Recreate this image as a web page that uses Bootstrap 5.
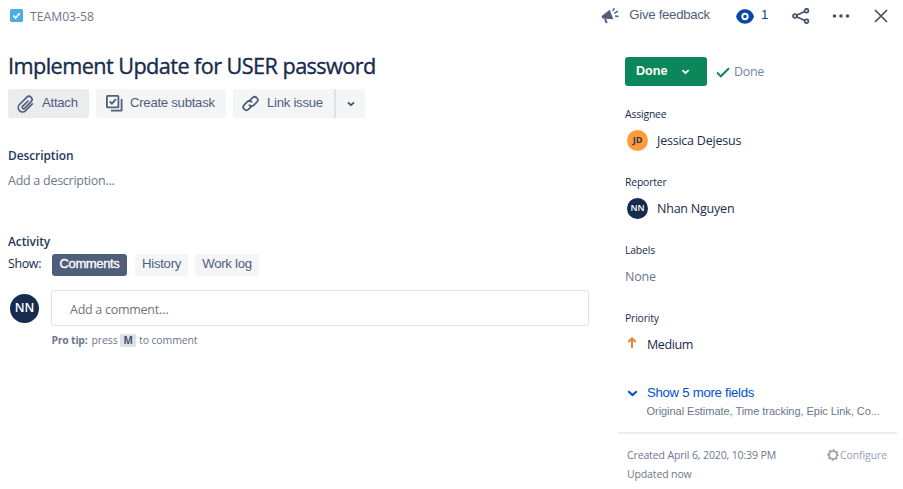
<!DOCTYPE html>
<html lang="en">
<head>
<meta charset="utf-8">
<meta name="viewport" content="width=device-width, initial-scale=1">
<title>TEAM03-58</title>
<link href="https://cdn.jsdelivr.net/npm/bootstrap@5.3.0/dist/css/bootstrap.min.css" rel="stylesheet">
<style>
  body { width: 903px; height: 489px; overflow: hidden; background: #fff; color: #172b4d; font: 12.5px/20px "Open Sans", "Noto Sans", sans-serif; letter-spacing: -.27px; white-space: nowrap; }
  svg { display: block; flex: none; }
  .ui { font-family: "Liberation Sans", Arial, sans-serif; font-size: 13.2px; letter-spacing: -.28px; }
  .slate { color: #505f79; }
  .muted { color: #6b778c; }
  .topbar { height: 32px; padding: 0 15px 0 10px; }
  .issue-key { font-size: 12.2px; letter-spacing: 0; color: #6b778c; margin-left: 7px; padding-top: 1px; }
  .main-col { width: 581px; margin-left: 8px; }
  .side-col { width: 279px; margin-left: 29px; }
  .issue-title { font-size: 21.7px; line-height: 28px; font-weight: 500; letter-spacing: -.58px; margin: 20px 0 9px; -webkit-text-stroke: .35px #172b4d; }
  .tool { height: 29px; padding: 0 11px 2px 9px; background: #f4f5f7; border-radius: 3px; border: 0; color: #505f79; letter-spacing: -.28px; }
  .tool.hovered { background: #ebecf0; }
  .sec { font-size: 11.9px; font-weight: 600; line-height: 20px; letter-spacing: -.05px; margin: 0; color: #253858; }
  .tab-btn { height: 22px; padding: 0 7px 2px; border-radius: 3px; background: #f4f5f7; color: #505f79; border: 0; line-height: 20px; }
  .tab-btn.on { background: #505f79; color: #fff; letter-spacing: -.35px; font-size: 13px; -webkit-text-stroke: .3px #fff; }
  .face { border-radius: 50%; background: #172b4d; color: #fff; font-weight: 600; letter-spacing: 0; flex: none; }
  .face-lg { width: 29px; height: 29px; font-size: 12.5px; }
  .face-sm { width: 21px; height: 21px; font-size: 9px; }
  .face-jd { background: #ff9b38; color: #253858; font-weight: 700; }
  .comment-box { width: 538px; height: 36px; border: 1px solid #dfe1e6; border-radius: 3px; padding: 3px 18px 0; color: #6f747c; }
  .tip { font-size: 10.5px; letter-spacing: -.12px; margin: 4px 0 0 43.5px; color: #6b778c; }
  .tip b { font-size: 10.4px; letter-spacing: -.2px; }
  .tip kbd { background: #dfe1e6; color: #42526e; font: 700 10px/13px "Open Sans", sans-serif; padding: 0; width: 16px; height: 13px; text-align: center; border-radius: 2px; margin: 0 3px 0 2.5px; }
  .status-btn { width: 82px; height: 29px; background: #0b875b; color: #fff; border: 0; border-radius: 3px; padding: 0 17px 2px 11px; font-weight: 700; font-size: 12.6px; letter-spacing: 0; }
  .field-name { font-size: 10.4px; font-weight: 500; letter-spacing: -.17px; line-height: 16px; }
  .field { height: 68px; padding-left: 7px; }
  .field-value { height: 36px; padding-left: 2px; }
  .field-value span { font-size: 12.5px; letter-spacing: -.22px; padding-top: 2px; }
  .more-link { color: #0052cc; }
  .foot { border-top: 2px solid #ebecf0; padding: 12px 10px 0 9px; font-size: 10.5px; letter-spacing: -.13px; line-height: 19px; color: #6b778c; }
</style>
</head>
<body>
<header class="topbar d-flex align-items-center">
  <svg style="margin-bottom:1px" width="13" height="13" viewBox="0 0 13 13"><rect width="13" height="13" rx="1.5" fill="#4bade8"/><path d="M3.3 6.7 5.6 9 9.7 4.3" fill="none" stroke="#fff" stroke-width="1.8"/></svg>
  <span class="issue-key">TEAM03-58</span>
  <div class="ui slate d-flex align-items-center ms-auto">
    <svg width="19" height="18" viewBox="0 0 19 18" fill="#505f79"><path d="M.7 9Q.3 11 1.7 11.6L12.3 12.3 8.7 2.8Z"/><path d="m4 11.5 1.7 4.7" fill="none" stroke="#505f79" stroke-width="2"/><path d="M11.8 4l1.5-2.8M13.3 6.3l3.5-2.2M14 9l3.6.4" fill="none" stroke="#505f79" stroke-width="1.5"/></svg>
    <span style="margin:0 26px 2px 9px">Give feedback</span>
    <svg width="18" height="15" viewBox="0 0 18 15"><path d="M0 7.5C1.7 2.7 5 .3 9 .3s7.3 2.4 9 7.2C16.3 12.3 13 14.7 9 14.7S1.7 12.3 0 7.5Z" fill="#0747a6"/><circle cx="9" cy="7.5" r="2.7" fill="none" stroke="#fff" stroke-width="1.9"/></svg>
    <span style="color:#0747a6;margin:0 24px 2px 7px">1</span>
    <svg width="18" height="16" viewBox="0 0 18 16" fill="none" stroke="#42526e" stroke-width="1.7"><circle cx="2.9" cy="8" r="1.9"/><circle cx="14.5" cy="2.7" r="1.9"/><circle cx="14.5" cy="13.3" r="1.9"/><path d="m4.6 7.2 8.2-3.7M4.6 8.800l8.200 3.700"/></svg>
    <svg width="64" height="14" viewBox="0 0 64 14"><g fill="#42526e"><circle cx="24.5" cy="7" r="1.8"/><circle cx="31" cy="7" r="1.8"/><circle cx="37.5" cy="7" r="1.8"/></g></svg>
    <svg width="14" height="14" viewBox="0 0 14 14"><path d="m1 1 12 12M13 1 1 13" stroke="#42526e" stroke-width="1.7"/></svg>
  </div>
</header>
<div class="d-flex">
  <main class="main-col">
    <h1 class="issue-title">Implement Update for USER password</h1>
    <div class="d-flex ui">
      <button class="tool hovered d-flex align-items-center" style="width:81px">
        <svg style="margin:2px 8px 0 0" width="17" height="18" viewBox="0 0 17 18" fill="none" stroke="#505f79" stroke-width="1.7" stroke-linecap="round"><path d="m11 6-5.400 5.400a1.300 1.300 0 0 0 2 1.900l6.500-6.600a3.100 3.100 0 0 0-4.400-4.400L2.500 9.500a4.300 4.300 0 0 0 6.100 6.100l6.700-6.700"/></svg>Attach
      </button>
      <button class="tool d-flex align-items-center" style="width:130px;margin-left:7px">
        <svg style="margin:2px 7px 0 1px" width="17" height="17" viewBox="0 0 17 17" fill="none" stroke="#505f79" stroke-width="1.8"><rect x=".9" y=".9" width="11.5" height="11.5" rx=".6"/><path d="m3.7 6.3 2.200 2.300 4-4.500M15.600 4v11.200a.5.500 0 0 1-.5.500H5"/></svg>Create subtask
      </button>
      <button class="tool d-flex align-items-center rounded-end-0" style="width:101px;margin-left:7px">
        <svg style="margin:2px 8px 0 0" width="17" height="17" viewBox="0 0 17 17" fill="none" stroke="#505f79" stroke-width="1.8" stroke-linecap="round"><path d="M7 6.3 10.3 3a3 3 0 0 1 4.700 3.900l-3.400 3.500a3 3 0 0 1-4.200-.3"/><path d="m10 10.7-3.300 3.300A3 3 0 0 1 2 10.100l3.400-3.500a3 3 0 0 1 4.200.3"/></svg>Link issue
      </button>
      <button class="tool d-flex align-items-center justify-content-center rounded-start-0 p-0" style="width:31px;border-left:2px solid #dfe1e6">
        <svg style="margin-top:1px" width="8" height="6" viewBox="0 0 8 6"><path d="m1 1.5 3 2.7 3-2.7" fill="none" stroke="#42526e" stroke-width="1.7"/></svg>
      </button>
    </div>
    <h2 class="sec" style="margin-top:27px">Description</h2>
    <div class="muted" style="margin-top:6px">Add a description...</div>
    <h2 class="sec" style="margin-top:40px">Activity</h2>
    <div class="d-flex align-items-center" style="margin-top:3px;height:22px">
      <span style="width:44px;padding-bottom:3px;letter-spacing:-.4px">Show:</span>
      <button class="tab-btn ui on" style="width:75px">Comments</button>
      <button class="tab-btn ui" style="width:53px;margin-left:8px">History</button>
      <button class="tab-btn ui" style="width:64px;margin-left:7px">Work log</button>
    </div>
    <div class="d-flex align-items-center" style="margin-top:14px">
      <div class="face face-lg d-flex align-items-center justify-content-center" style="margin:0 12px 0 2px">NN</div>
      <div class="comment-box d-flex align-items-center">Add a comment…</div>
    </div>
    <div class="tip d-flex align-items-center"><b>Pro tip:</b><span style="margin-left:4px">press</span><kbd>M</kbd><span>to comment</span></div>
  </main>
  <aside class="side-col">
    <div class="d-flex align-items-center" style="margin:25px 0 0 7px">
      <button class="ui status-btn d-flex align-items-center justify-content-between">Done
        <svg width="9" height="6" viewBox="0 0 9 6" style="margin-top:3px"><path d="m1.3 1.2 3.2 2.8 3.2-2.8" fill="none" stroke="#fff" stroke-width="1.7"/></svg>
      </button>
      <svg style="margin:2px 4px 0 9px" width="14" height="11" viewBox="0 0 14 11"><path d="M1 5.5 4.8 9.3 13 1.2" fill="none" stroke="#0b875b" stroke-width="1.9"/></svg>
      <span style="color:#7a869a;letter-spacing:-.3px">Done</span>
    </div>
    <div class="field" style="margin-top:20px"><div class="field-name">Assignee</div>
      <div class="field-value d-flex align-items-center"><div class="face face-sm face-jd d-flex align-items-center justify-content-center" style="margin-right:9px">JD</div><span>Jessica Dejesus</span></div></div>
    <div class="field"><div class="field-name">Reporter</div>
      <div class="field-value d-flex align-items-center"><div class="face face-sm d-flex align-items-center justify-content-center" style="margin-right:9px">NN</div><span>Nhan Nguyen</span></div></div>
    <div class="field"><div class="field-name">Labels</div>
      <div class="field-value d-flex align-items-center ps-0"><span class="muted">None</span></div></div>
    <div class="field"><div class="field-name">Priority</div>
      <div class="field-value d-flex align-items-center"><svg style="margin:-3px 10px 0 0" width="10" height="11" viewBox="0 0 10 11"><path d="M5 11V1.5M1.2 5 5 1.3 8.800 5" fill="none" stroke="#ed7f30" stroke-width="1.9"/></svg><span style="letter-spacing:-.4px">Medium</span></div></div>
    <div class="d-flex align-items-center ui more-link" style="padding-left:9px;margin-top:4px;height:20px">
      <svg style="margin:3px 9px 0 0" width="11" height="7" viewBox="0 0 11 7"><path d="m1.3 1.2 4.2 3.9 4.2-3.9" fill="none" stroke="#0052cc" stroke-width="2.2"/></svg><span style="padding-top:1px">Show 5 more fields</span>
    </div>
    <div class="ui muted" style="padding-left:28.5px;font-size:11px;letter-spacing:-.04px;line-height:18px">Original Estimate, Time tracking, Epic Link, Co...</div>
    <div class="foot" style="margin-top:12px">
      <div class="d-flex justify-content-between"><span>Created April 6, 2020, 10:39 PM</span>
        <span class="d-flex align-items-center" style="color:#97a0af;letter-spacing:-.1px"><svg style="margin:0 1px 1px 0" width="12" height="12" viewBox="0 0 12 12" fill="none" stroke="#97a0af"><circle cx="6" cy="6" r="4" stroke-width="1.7"/><circle cx="6" cy="6" r="5" stroke-width="1.6" stroke-dasharray="2 1.927" stroke-dashoffset="1"/></svg>Configure</span></div>
      <div>Updated now</div>
    </div>
  </aside>
</div>
<script src="https://cdn.jsdelivr.net/npm/bootstrap@5.3.0/dist/js/bootstrap.bundle.min.js"></script>
</body>
</html>
